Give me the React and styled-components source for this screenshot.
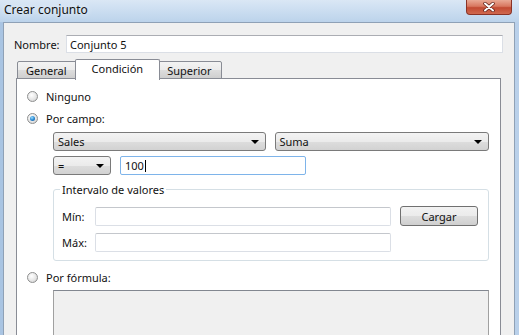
import styled, { createGlobalStyle } from 'styled-components'

const GlobalStyle = createGlobalStyle`
  html, body {
    margin: 0;
    padding: 0;
  }
  body {
    font-family: 'Noto Sans', 'Open Sans', sans-serif;
    font-size: 11px;
    color: #111111;
  }
`

export default function App() {
  return (
    <Window>
      <GlobalStyle />
      <TitleBar>
        <Title>Crear conjunto</Title>
        <CloseButton>
          <svg width="12" height="10" viewBox="0 0 12 10">
            <path d="M2 1.5 L10 8.5 M10 1.5 L2 8.5" stroke="#5a1a12" strokeWidth="3.4" strokeLinecap="round" />
            <path d="M2 1.5 L10 8.5 M10 1.5 L2 8.5" stroke="#ffffff" strokeWidth="2" strokeLinecap="round" />
          </svg>
        </CloseButton>
      </TitleBar>
      <Body>
        <NameRow>
          <NameLabel>Nombre:</NameLabel>
          <TextBox>Conjunto 5</TextBox>
        </NameRow>
        <TabArea>
          <Tabs>
            <Tab>General</Tab>
            <Tab $active>Condición</Tab>
            <Tab>Superior</Tab>
          </Tabs>
          <Panel>
            <RadioRow>
              <Radio />
              Ninguno
            </RadioRow>
            <RadioRow $top={2}>
              <Radio $checked />
              Por campo:
            </RadioRow>
            <Indent>
              <ComboRow $top={4}>
                <Combo $width={213}>
                  Sales
                  <Caret />
                </Combo>
                <Combo $width={215}>
                  Suma
                  <Caret />
                </Combo>
              </ComboRow>
              <ComboRow $top={5}>
                <Combo $width={58}>
                  =
                  <Caret />
                </Combo>
                <ValueBox>
                  100
                  <Cursor />
                </ValueBox>
              </ComboRow>
              <Group>
                <Legend>Intervalo de valores</Legend>
                <FieldRow>
                  <FieldLabel>Mín:</FieldLabel>
                  <Field />
                  <Button>Cargar</Button>
                </FieldRow>
                <FieldRow $top={7}>
                  <FieldLabel>Máx:</FieldLabel>
                  <Field />
                </FieldRow>
              </Group>
            </Indent>
            <RadioRow $top={6}>
              <Radio />
              Por fórmula:
            </RadioRow>
            <Indent>
              <FormulaBox />
            </Indent>
          </Panel>
        </TabArea>
      </Body>
    </Window>
  )
}

const Window = styled.div`
  width: 519px;
  height: 335px;
  overflow: hidden;
  display: flex;
  flex-direction: column;
  background: linear-gradient(90deg, #a9c4e2 0%, #c9dbef 35%, #d4e3f3 60%, #b9d0ea 100%);
`

const TitleBar = styled.div`
  height: 22px;
  flex: none;
  display: flex;
  align-items: flex-start;
  padding-left: 4px;
  background: linear-gradient(180deg, #dae7f5 0%, #c9dcf0 55%, #bcd3eb 100%);
`

const Title = styled.div`
  font-size: 12px;
  line-height: 20px;
  color: #111111;
  text-shadow: 0 0 6px #ffffff;
`

const CloseButton = styled.div`
  margin-left: auto;
  margin-right: 7px;
  width: 44px;
  height: 14px;
  display: flex;
  align-items: center;
  justify-content: center;
  border: 1px solid #8a3326;
  border-top: 0;
  border-radius: 0 0 4px 4px;
  background: linear-gradient(180deg, #e9a995 0%, #d8775f 45%, #c24a32 55%, #d0694f 100%);
`

const Body = styled.div`
  flex: 1;
  margin: 0 4px 0 3px;
  border: 1px solid #8fa1b6;
  border-bottom: 0;
  background: #f0f0f0;
  padding: 12px 11px 0 10px;
  display: flex;
  flex-direction: column;
`

const NameRow = styled.div`
  display: flex;
  align-items: center;
`

const NameLabel = styled.div`
  width: 52px;
  flex: none;
`

const TextBox = styled.div`
  flex: 1;
  height: 18px;
  box-sizing: border-box;
  border: 1px solid #dbdfe6;
  border-top-color: #abadb3;
  background: #ffffff;
  padding-left: 3px;
  display: flex;
  align-items: center;
`

const TabArea = styled.div`
  flex: 1;
  margin: 6px 2px 0 2px;
  display: flex;
  flex-direction: column;
`

const Tabs = styled.div`
  display: flex;
  align-items: flex-end;
  padding-left: 1px;
`

const Tab = styled.div`
  position: relative;
  height: ${p => (p.$active ? 21 : 18)}px;
  box-sizing: border-box;
  padding: ${p => (p.$active ? '0 16px 3px' : '0 9px 0 8px')};
  margin: ${p => (p.$active ? '0 -2px -1px' : '0')};
  z-index: ${p => (p.$active ? 2 : 1)};
  border: 1px solid #898c95;
  border-bottom: ${p => (p.$active ? '0' : '1px solid #898c95')};
  border-radius: 2px 2px 0 0;
  background: ${p =>
    p.$active
      ? '#ffffff'
      : 'linear-gradient(180deg, #f3f3f3 0%, #ebebeb 50%, #dddddd 51%, #cfcfcf 100%)'};
  display: flex;
  align-items: center;
`

const Panel = styled.div`
  flex: 1;
  background: #ffffff;
  border: 1px solid #898c95;
  margin-top: -1px;
  padding: 7px 11px 0 10px;
  display: flex;
  flex-direction: column;
`

const RadioRow = styled.div`
  height: 20px;
  margin-top: ${p => p.$top || 0}px;
  display: flex;
  align-items: center;
  gap: 8px;
`

const Radio = styled.span`
  position: relative;
  width: 11px;
  height: 11px;
  box-sizing: border-box;
  border-radius: 50%;
  border: 1px solid #8e8f8f;
  background: radial-gradient(circle at 40% 35%, #ffffff 0%, #e6e6e6 55%, #c9c9c9 100%);

  &::after {
    content: '';
    display: ${p => (p.$checked ? 'block' : 'none')};
    position: absolute;
    left: 2px;
    top: 2px;
    width: 5px;
    height: 5px;
    border-radius: 50%;
    background: radial-gradient(circle at 40% 35%, #9fe0ff 0%, #2a8ad4 50%, #0d4a8a 100%);
  }
`

const Indent = styled.div`
  margin-left: 26px;
  display: flex;
  flex-direction: column;
`

const ComboRow = styled.div`
  display: flex;
  gap: 9px;
  margin-top: ${p => p.$top || 0}px;
`

const Combo = styled.div`
  width: ${p => p.$width}px;
  height: 19px;
  box-sizing: border-box;
  border: 1px solid #7a7a7a;
  border-radius: 3px;
  background: linear-gradient(180deg, #f3f3f3 0%, #ebebeb 50%, #dddddd 51%, #d2d2d2 100%);
  padding: 0 6px 0 4px;
  display: flex;
  align-items: center;
  justify-content: space-between;
`

const Caret = styled.span`
  width: 0;
  height: 0;
  border-left: 4px solid transparent;
  border-right: 4px solid transparent;
  border-top: 4px solid #000000;
`

const ValueBox = styled.div`
  width: 186px;
  height: 19px;
  box-sizing: border-box;
  border: 1px solid #7eb4ea;
  border-radius: 2px;
  background: #ffffff;
  padding-left: 4px;
  display: flex;
  align-items: center;
`

const Cursor = styled.span`
  width: 1px;
  height: 12px;
  margin-left: 1px;
  background: #000000;
`

const Group = styled.fieldset`
  width: 436px;
  box-sizing: border-box;
  margin: 7px 0 0 0;
  padding: 0 10px 8px 8px;
  border: 1px solid #d5dfe5;
  border-radius: 3px;
  min-width: 0;
`

const Legend = styled.legend`
  padding: 0 2px;
  margin-left: -2px;
  font-size: 11px;
  line-height: 15px;
`

const FieldRow = styled.div`
  display: flex;
  align-items: center;
  margin-top: ${p => (p.$top === undefined ? 9 : p.$top)}px;
`

const FieldLabel = styled.div`
  width: 33px;
  flex: none;
`

const Field = styled.div`
  width: 296px;
  height: 19px;
  box-sizing: border-box;
  border: 1px solid #dbdfe6;
  border-top-color: #c4c7cc;
  border-radius: 2px;
  background: #ffffff;
`

const Button = styled.div`
  width: 78px;
  height: 20px;
  box-sizing: border-box;
  margin-left: 9px;
  border: 1px solid #707070;
  border-radius: 3px;
  background: linear-gradient(180deg, #f2f2f2 0%, #ebebeb 50%, #dddddd 51%, #cfcfcf 100%);
  display: flex;
  align-items: center;
  justify-content: center;
`

const FormulaBox = styled.div`
  width: 436px;
  height: 60px;
  margin-top: 3px;
  box-sizing: border-box;
  border: 1px solid #a0a0a0;
  border-top-color: #828790;
  background: #f0f0f0;
`
